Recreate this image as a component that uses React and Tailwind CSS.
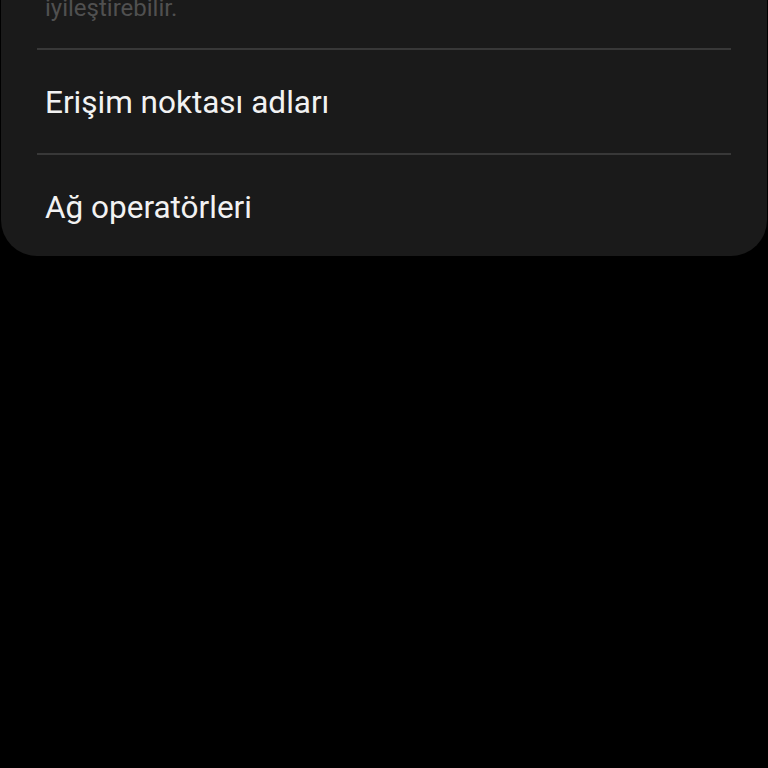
import React from 'react';

export default function App() {
  return (
    <div className="min-h-[768px] bg-black font-['Roboto',sans-serif]">
      <div className="mx-px bg-[#1a1a1a] rounded-b-[36px] overflow-hidden">
        <div className="h-[48px] relative">
          <p className="absolute left-[44px] top-[-4px] text-[24px] leading-none text-[#505050]">iyileştirebilir.</p>
        </div>
        <div className="mx-[36px] h-[2px] bg-[#383838]" />
        <div className="h-[103px] flex items-center px-[44px] pt-[2px] text-[31.5px] text-[#f2f2f2]">Erişim noktası adları</div>
        <div className="mx-[36px] h-[2px] bg-[#383838]" />
        <div className="h-[101px] flex items-center px-[44px] pt-[4px] text-[31.5px] text-[#f2f2f2]">Ağ operatörleri</div>
      </div>
    </div>
  );
}
